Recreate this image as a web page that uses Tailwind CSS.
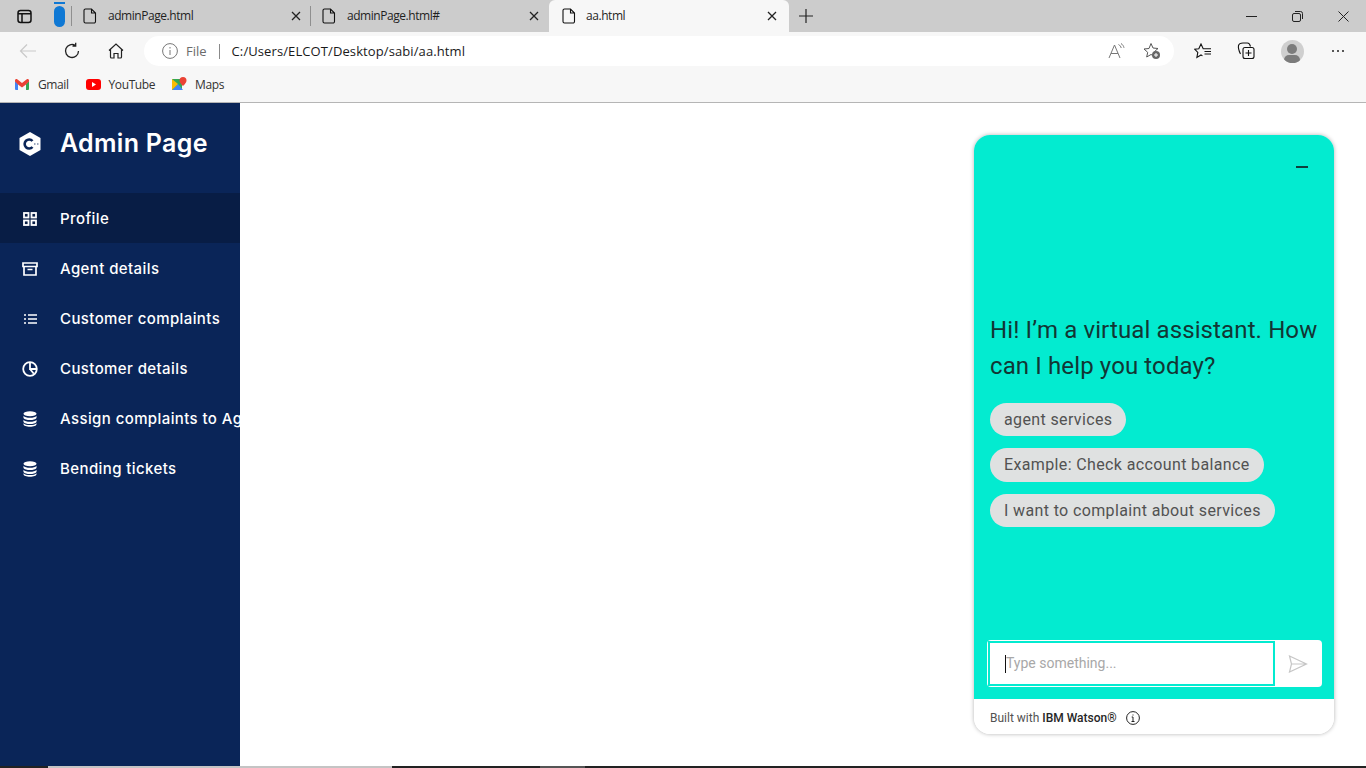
<!DOCTYPE html>
<html lang="en">
<head>
<meta charset="UTF-8" />
<title>aa.html</title>
<script src="https://cdn.jsdelivr.net/npm/@tailwindcss/browser@4"></script>
</head>
<body class="h-[768px] w-[1366px] overflow-hidden flex flex-col bg-white font-['Open_Sans',sans-serif]">
  <!-- Tab strip -->
  <div class="h-[32px] bg-[#cccccc] flex items-stretch text-[12px] tracking-[-0.45px] text-[#1f1f1f] shrink-0">
    <div class="w-[48px] flex items-center justify-center">
      <svg width="15" height="15" viewBox="0 0 15 15" fill="none" stroke="#111" stroke-width="1.500"><rect x="1" y="1.500" width="13" height="12" rx="2.500"/><path d="M1 4.800h13M5 4.800v8.700"/></svg>
    </div>
    <div class="w-[23px] flex flex-col items-center pt-[2px]">
      <div class="w-[11px] h-[1.5px] bg-[#0f78d4]"></div>
      <div class="w-[11px] h-[21px] mt-[2px] rounded-full bg-[#0f78d4]"></div>
    </div>
    <div class="w-[239px] border-l border-[#8f8f8f] my-[6px] flex items-center pl-[11px] pr-[9px]">
      <svg width="14" height="16" viewBox="0 0 14 16" fill="none" stroke="#111" stroke-width="1.1"><path d="M2.5 1h6l4 4v8.5a1.5 1.5 0 0 1-1.5 1.500H2.500A1.500 1.500 0 0 1 1 13.500v-11A1.500 1.500 0 0 1 2.500 1zM8.500 1v4h4"/></svg>
      <span class="ml-[11px] flex-1">adminPage.html</span>
      <svg width="10" height="10" viewBox="0 0 10 10" stroke="#222" stroke-width="1.300"><path d="M1 1l8 8M9 1l-8 8"/></svg>
    </div>
    <div class="w-[239px] border-l border-[#8f8f8f] my-[6px] flex items-center pl-[11px] pr-[10px]">
      <svg width="14" height="16" viewBox="0 0 14 16" fill="none" stroke="#111" stroke-width="1.1"><path d="M2.5 1h6l4 4v8.500a1.500 1.500 0 0 1-1.500 1.500H2.500A1.500 1.500 0 0 1 1 13.500v-11A1.500 1.500 0 0 1 2.500 1zM8.500 1v4h4"/></svg>
      <span class="ml-[11px] flex-1">adminPage.html#</span>
      <svg width="10" height="10" viewBox="0 0 10 10" stroke="#222" stroke-width="1.300"><path d="M1 1l8 8M9 1l-8 8"/></svg>
    </div>
    <div class="w-[240px] bg-[#f7f7f7] rounded-t-[6px] flex items-center pl-[13px] pr-[12px]">
      <svg width="14" height="16" viewBox="0 0 14 16" fill="none" stroke="#111" stroke-width="1.100"><path d="M2.500 1h6l4 4v8.500a1.500 1.500 0 0 1-1.500 1.500H2.500A1.500 1.500 0 0 1 1 13.500v-11A1.500 1.500 0 0 1 2.500 1zM8.500 1v4h4"/></svg>
      <span class="ml-[10px] flex-1">aa.html</span>
      <svg width="10" height="10" viewBox="0 0 10 10" stroke="#222" stroke-width="1.300"><path d="M1 1l8 8M9 1l-8 8"/></svg>
    </div>
    <div class="w-[34px] flex items-center justify-center">
      <svg width="14" height="14" viewBox="0 0 14 14" stroke="#222" stroke-width="1.200"><path d="M7 0v14M0 7h14"/></svg>
    </div>
    <div class="flex-1 flex items-center justify-end">
      <div class="w-[46px] flex justify-center"><svg width="11" height="11" viewBox="0 0 11 11" stroke="#222"><path d="M0 5.500h11"/></svg></div>
      <div class="w-[46px] flex justify-center"><svg width="11" height="11" viewBox="0 0 11 11" fill="none" stroke="#222"><rect x=".5" y="2.500" width="8" height="8" rx="1.500"/><path d="M3 .5h5.500a2 2 0 0 1 2 2V8"/></svg></div>
      <div class="w-[46px] flex justify-center"><svg width="11" height="11" viewBox="0 0 11 11" stroke="#222"><path d="M.5.5l10 10M10.500.5l-10 10"/></svg></div>
    </div>
  </div>

  <!-- Toolbar -->
  <div class="h-[38px] bg-[#f7f7f7] flex items-center shrink-0">
    <div class="w-[56px] flex justify-center">
      <svg width="18" height="16" viewBox="0 0 18 16" fill="none" stroke="#c9c9c9" stroke-width="1.200"><path d="M17 8H1.500M8 1.500L1.500 8 8 14.500"/></svg>
    </div>
    <div class="w-[31px] flex justify-center">
      <svg width="18" height="18" viewBox="0 0 18 18" fill="none" stroke="#222" stroke-width="1.300"><path d="M15.500 9A6.500 6.500 0 1 1 12.500 3.500M12.700 .8v3.200H9.500"/></svg>
    </div>
    <div class="w-[58px] flex justify-center">
      <svg width="16" height="16" viewBox="0 0 16 16" fill="none" stroke="#222" stroke-width="1.200"><path d="M1 7.500L8 1l7 6.500M2.500 6.500V14a1 1 0 0 0 1 1H6v-4.500h4V15h2.500a1 1 0 0 0 1-1V6.500"/></svg>
    </div>
    <div class="w-[1030px] h-[30px] rounded-full bg-white flex items-center pl-[18px] pr-[13px] text-[13px] -ml-px">
      <svg width="16" height="16" viewBox="0 0 16 16" fill="none" stroke="#777" stroke-width="1"><circle cx="8" cy="8" r="7.400"/><path d="M8 7v5M8 4v1.500"/></svg>
      <span class="ml-[8px] pt-[2px] text-[#6b6b6b]">File</span>
      <span class="ml-[12px] w-px h-[15px] bg-[#8a8a8a]"></span>
      <span class="ml-[12px] pt-[2px] flex-1 text-[#1a1a1a] tracking-[0.1px]">C:/Users/ELCOT/Desktop/sabi/aa.html</span>
      <svg width="17" height="16" viewBox="0 0 17 16" fill="none" stroke="#777" stroke-width="1"><path d="M1 15L6.500 2 12 15M3 10.500h7M10.500 1.500c1.500.8 2.400 2 2.700 3.500M13 .5c1.600 1 2.600 2.500 3 4.300"/></svg>
      <svg class="ml-[18px]" width="18" height="18" viewBox="0 0 18 18" fill="none" stroke="#555" stroke-width="1"><path d="M8 1.500l2 4.500 5 .5-3.700 3.300 1 4.700L8 12.500 3.700 15l1-4.700L1 7l5-.5z"/><circle cx="13" cy="13" r="4" fill="#666" stroke="none"/><path d="M13 11v4M11 13h4" stroke="#fff"/></svg>
    </div>
    <div class="w-[43px] flex justify-center ml-[7px]">
      <svg width="18" height="17" viewBox="0 0 18 17" fill="none" stroke="#111" stroke-width="1.100"><path d="M11.500 5.800H9.200L7 1 4.800 5.800 .8 6.300l3 3.100-.9 5.100L7 12l1.500.9M10.500 8.500H17M10.500 11H17M11.500 5.800H17"/></svg>
    </div>
    <div class="w-[44px] flex justify-center">
      <svg width="18" height="18" viewBox="0 0 18 18" fill="none" stroke="#111" stroke-width="1.100"><path d="M3.500 12C2 9 1 6 1.500 3.500 2 1.500 4 1 6 1h4.500c1.500 0 2.500 1.500 3 3.500"/><rect x="6" y="5.500" width="11" height="11" rx="2"/><path d="M11.500 8v6M8.500 11h6"/></svg>
    </div>
    <div class="w-[48px] flex justify-center">
      <div class="w-[23px] h-[23px] rounded-full bg-[#cfcfcf] overflow-hidden flex flex-col items-center">
        <div class="w-[10px] h-[10px] rounded-full bg-[#7c7c7c] mt-[4px] shrink-0"></div>
        <div class="w-[16px] h-[10px] rounded-full bg-[#7c7c7c] mt-[1px] shrink-0"></div>
      </div>
    </div>
    <div class="w-[44px] flex justify-center gap-[3px]">
      <span class="w-[2px] h-[2px] bg-[#222] rounded-full"></span>
      <span class="w-[2px] h-[2px] bg-[#222] rounded-full"></span>
      <span class="w-[2px] h-[2px] bg-[#222] rounded-full"></span>
    </div>
  </div>

  <!-- Bookmarks -->
  <div class="h-[33px] bg-[#f7f7f7] border-b border-[#b5b5b5] flex items-center pl-[15px] pb-[3px] text-[12px] tracking-[-0.4px] text-[#333] shrink-0">
    <svg width="14" height="11" viewBox="0 0 14 11"><path d="M0 2v8a1 1 0 0 0 1 1h2V5z" fill="#4285f4"/><path d="M14 2v8a1 1 0 0 1-1 1h-2V5z" fill="#34a853"/><path d="M0 2.500V1.500C0 .3 1.300-.3 2.200.3L7 4l4.800-3.700c.9-.6 2.200 0 2.200 1.200v1L11 5.500 7 8.500l-4-3z" fill="#ea4335"/></svg>
    <span class="ml-[9px]">Gmail</span>
    <svg class="ml-[17px]" width="15" height="11" viewBox="0 0 15 11"><rect width="15" height="11" rx="3" fill="#f00"/><path d="M6 3l4 2.500L6 8z" fill="#fff"/></svg>
    <span class="ml-[8px]">YouTube</span>
    <svg class="ml-[17px]" width="15" height="15" viewBox="0 0 15 15"><path d="M0 2h10v11H0z" fill="#34a853"/><path d="M0 13l6-6 5 6z" fill="#4285f4"/><path d="M0 2l6 5-6 6z" fill="#fbbc04"/><path d="M11 0a3.500 3.500 0 0 1 3.500 3.500C14.500 6 11 9 11 9S7.500 6 7.500 3.500A3.500 3.500 0 0 1 11 0z" fill="#ea4335"/></svg>
    <span class="ml-[8px]">Maps</span>
  </div>

  <!-- Page -->
  <div class="flex-1 flex min-h-0 font-['Inter',sans-serif]">
    <aside class="w-[240px] bg-[#0a2558] text-white shrink-0 overflow-hidden">
      <div class="h-[90px] flex items-center pl-[19px] pb-[8px]">
        <svg width="22" height="24" viewBox="0 0 22 24"><path d="M11 0l10.500 6v12L11 24 .5 18V6z" fill="#fff"/><path d="M13.500 9a4.500 4.500 0 1 0 0 6" fill="none" stroke="#0a2558" stroke-width="2.600"/><path d="M15 11h1.500v2H15zM18 11h1.500v2H18z" fill="#9aa6bd"/></svg>
        <span class="ml-[19px] text-[25px] font-semibold tracking-[0.3px] whitespace-nowrap">Admin Page</span>
      </div>
      <ul class="text-[15px] font-medium tracking-[0.4px] whitespace-nowrap">
        <li class="h-[50px] bg-[#081d45] flex items-center pt-[2px]">
          <div class="w-[60px] shrink-0 flex justify-center"><svg width="14" height="14" viewBox="0 0 14 14" fill="none" stroke="#fff" stroke-width="1.800"><rect x="1" y="1" width="4.500" height="4.500"/><rect x="8.500" y="1" width="4.500" height="4.500"/><rect x="1" y="8.500" width="4.500" height="4.500"/><rect x="8.500" y="8.500" width="4.500" height="4.500"/></svg></div>
          <span>Profile</span>
        </li>
        <li class="h-[50px] flex items-center pt-[2px]">
          <div class="w-[60px] shrink-0 flex justify-center"><svg width="16" height="14" viewBox="0 0 16 14" fill="none" stroke="#fff" stroke-width="1.700"><path d="M1 1h14v3.500H1zM2 4.500V13h12V4.500M5.500 7.500h5"/></svg></div>
          <span>Agent details</span>
        </li>
        <li class="h-[50px] flex items-center pt-[2px]">
          <div class="w-[60px] shrink-0 flex justify-center"><svg width="13" height="10" viewBox="0 0 13 10" fill="none" stroke="#fff" stroke-width="1.700"><path d="M0 1h2M4 1h9M0 5h2M4 5h9M0 9h2M4 9h9"/></svg></div>
          <span>Customer complaints</span>
        </li>
        <li class="h-[50px] flex items-center pt-[2px]">
          <div class="w-[60px] shrink-0 flex justify-center"><svg width="16" height="16" viewBox="0 0 16 16" fill="none" stroke="#fff" stroke-width="1.800"><circle cx="8" cy="8" r="6.800"/><path d="M8 1.500V8h6.500M8 8l3.800 4.800"/></svg></div>
          <span>Customer details</span>
        </li>
        <li class="h-[50px] flex items-center pt-[2px]">
          <div class="w-[60px] shrink-0 flex justify-center"><svg width="14" height="16" viewBox="0 0 14 16" fill="#fff"><ellipse cx="7" cy="2.800" rx="6.500" ry="2.500"/><path d="M.5 4.800c1 1.500 3.500 2 6.500 2s5.500-.5 6.500-2v2.200c-1 1.500-3.500 2-6.500 2S1.500 8.500.5 7zM.5 8.800c1 1.500 3.500 2 6.500 2s5.500-.5 6.500-2v2.200c-1 1.500-3.500 2-6.500 2s-5.500-.5-6.500-2zM.5 12.200c1 1.300 3.500 1.800 6.500 1.800s5.500-.5 6.500-1.800v1c0 1.500-3 2.500-6.500 2.500s-6.500-1-6.500-2.500z"/></svg></div>
          <span>Assign complaints to Agent</span>
        </li>
        <li class="h-[50px] flex items-center pt-[2px]">
          <div class="w-[60px] shrink-0 flex justify-center"><svg width="14" height="16" viewBox="0 0 14 16" fill="#fff"><ellipse cx="7" cy="2.800" rx="6.500" ry="2.500"/><path d="M.5 4.800c1 1.500 3.500 2 6.500 2s5.500-.5 6.500-2v2.200c-1 1.500-3.500 2-6.500 2S1.500 8.500.5 7zM.5 8.800c1 1.500 3.500 2 6.500 2s5.500-.5 6.500-2v2.200c-1 1.500-3.500 2-6.500 2s-5.500-.5-6.500-2zM.5 12.200c1 1.300 3.500 1.800 6.500 1.800s5.500-.5 6.500-1.800v1c0 1.500-3 2.500-6.500 2.500s-6.500-1-6.500-2.500z"/></svg></div>
          <span>Bending tickets</span>
        </li>
      </ul>
    </aside>

    <main class="flex-1 flex justify-end pt-[32px] pr-[32px] bg-white">
      <!-- Chat widget -->
      <div class="w-[360px] h-[599px] rounded-[16px] overflow-hidden flex flex-col shadow-[0_0_4px_rgba(0,0,0,0.3)] font-['Roboto',sans-serif]">
        <div class="flex-1 bg-[#03ebd0] flex flex-col px-[16px]">
          <div class="flex justify-end pt-[31px] pr-[10px]"><div class="w-[12px] h-[2px] bg-[#0f3f3c]"></div></div>
          <p class="mt-[144px] -mr-[8px] text-[24px] leading-[36px] tracking-[0.12px] text-[#123634]">Hi! I’m a virtual assistant. How can I help you today?</p>
          <div class="mt-[19px] flex flex-col items-start gap-[12px] text-[16px] tracking-[0.37px] text-[#525252]">
            <span class="h-[33px] leading-[33px] px-[14px] rounded-full bg-[#dfe1e1] whitespace-nowrap">agent services</span>
            <span class="h-[34px] leading-[34px] px-[14px] rounded-full bg-[#dfe1e1] whitespace-nowrap">Example: Check account balance</span>
            <span class="h-[33px] leading-[33px] px-[14px] rounded-full bg-[#dfe1e1] whitespace-nowrap">I want to complaint about services</span>
          </div>
          <div class="mt-auto mb-[12px] ml-[-3px] mr-[-4px] h-[47px] bg-white rounded-[4px] flex items-stretch p-px">
            <div class="w-[287px] border-2 border-[#03ebd0] flex items-center pl-[15px] text-[14px] text-[#a8a8a8]">
              <span class="w-px h-[18px] bg-[#111]"></span>
              <span>Type something...</span>
            </div>
            <div class="flex-1 flex items-center justify-center">
              <svg width="20" height="18" viewBox="0 0 20 18" fill="none" stroke="#c6c6c6" stroke-width="1.200"><path d="M1.500 1l17 8-17 8 2-8zM3.500 9h15"/></svg>
            </div>
          </div>
        </div>
        <div class="h-[35px] bg-white flex items-center pl-[16px] pt-[3px] text-[12px] text-[#525252] shrink-0">
          <span>Built with <b class="font-medium text-[#262626]">IBM Watson®</b></span>
          <svg class="ml-[9px]" width="14" height="14" viewBox="0 0 14 14" fill="none" stroke="#222" stroke-width="1"><circle cx="7" cy="7" r="6.400"/><path d="M5.500 10.500h3M7 10.500V6H5.700M7 3.500v1"/></svg>
        </div>
      </div>
    </main>
  </div>

  <!-- Taskbar edge -->
  <div class="h-[2px] flex shrink-0 bg-[#222222]">
    <div class="w-[48px]"></div>
    <div class="w-[344px] bg-[#c4c4c4]"></div>
    <div class="w-[148px]"></div>
    <div class="w-[45px] bg-[#555555]"></div>
  </div>
</body>
</html>
